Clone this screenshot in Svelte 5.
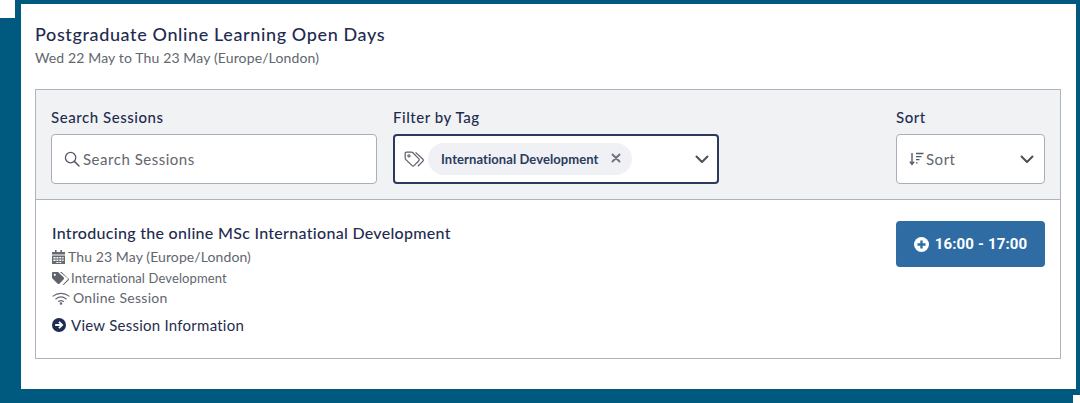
<script>
	const session = {
		title: 'Introducing the online MSc International Development',
		date: 'Thu 23 May (Europe/London)',
		tag: 'International Development',
		kind: 'Online Session',
		time: '16:00 - 17:00'
	}
</script>

<div class="page">
	<div class="corner top-left"></div>
	<div class="corner bottom-right"></div>

	<main class="panel">
		<h1>Postgraduate Online Learning Open Days</h1>
		<p class="dates">Wed 22 May to Thu 23 May (Europe/London)</p>

		<section class="box">
			<div class="filters">
				<div class="field search">
					<label for="q">Search Sessions</label>
					<div class="control">
						<svg class="ico-search" viewBox="0 0 16 16" width="16" height="16">
							<circle cx="6.6" cy="6.6" r="5.2" fill="none" stroke="#555b66" stroke-width="1.3" />
							<path d="M10.4 10.4 15 15" stroke="#555b66" stroke-width="1.5" stroke-linecap="round" />
						</svg>
						<span id="q" class="placeholder">Search Sessions</span>
					</div>
				</div>

				<div class="field tag">
					<label for="t">Filter by Tag</label>
					<div class="control focused">
						<svg class="ico-tags" viewBox="0 0 18 14.500" width="20" height="16" fill="none" stroke="#5c6068" stroke-width="1.100" stroke-linejoin="round">
							<path d="M1 2.200c0-.7.5-1.200 1.200-1.200h4.600c.4 0 .7.1 1 .4l5.600 5.700c.5.5.5 1.200 0 1.700l-4.400 4.500c-.5.5-1.200.5-1.700 0L1.400 7.600c-.3-.3-.4-.6-.4-1z" />
							<path d="M10.400 1.200l6.700 6.300c.5.5.5 1.200 0 1.700l-4.600 4.600" />
							<circle cx="4.400" cy="4.400" r="1" />
						</svg>
						<span id="t" class="chip">
							<span class="chip-text">{session.tag}</span>
							<svg viewBox="0 0 10 10" width="10" height="10">
								<path d="M1.500 1.500l7 7M8.500 1.500l-7 7" stroke="#6f7480" stroke-width="2" stroke-linecap="round" />
							</svg>
						</span>
						<svg class="chev" viewBox="0 0 14 9" width="14" height="9">
							<path d="M1.500 1.500 7 7l5.500-5.500" fill="none" stroke="#4a4f5a" stroke-width="2" stroke-linecap="round" stroke-linejoin="round" />
						</svg>
					</div>
				</div>

				<div class="field sort">
					<label for="s">Sort</label>
					<div class="control">
						<svg class="ico-sort" viewBox="0 0 15 14" width="15" height="14">
							<path d="M3 1v11M.8 9.600 3 12.400l2.200-2.800" fill="none" stroke="#555b66" stroke-width="1.400" />
							<path d="M7 1.500h7.500M7 4.600h5.500M7 7.700h3.500M7 10.800h1.600" stroke="#555b66" stroke-width="1.300" />
						</svg>
						<span id="s" class="placeholder sort-text">Sort</span>
						<svg class="chev" viewBox="0 0 14 9" width="14" height="9">
							<path d="M1.500 1.500 7 7l5.500-5.500" fill="none" stroke="#4a4f5a" stroke-width="2" stroke-linecap="round" stroke-linejoin="round" />
						</svg>
					</div>
				</div>
			</div>

			<div class="session">
				<div class="info">
					<h2>{session.title}</h2>
					<div class="meta date">
						<svg viewBox="0 0 13 14" width="13" height="14" fill="#666a72">
							<path d="M3 0h1.600v2H8.400V0H10v2h3v2.600H0V2h3zM0 5.600h13V14H0zM1.400 6.900v1.600h2.200V6.900zm3 0v1.600h2V6.900zm2.900 0v1.600h2V6.900zm2.900 0v1.600h1.400V6.900zM1.400 9.500v1.500h2.200V9.500zm3 0v1.500h2V9.500zm2.900 0v1.500h2V9.500zm2.900 0v1.500h1.400V9.500zM4.400 12v1h2v-1zm2.900 0v1h2v-1z" fill-rule="evenodd" />
						</svg>
						{session.date}
					</div>
					<div class="meta small">
						<svg viewBox="0 0 17 13" width="17" height="13" fill="#5f636b">
							<path fill-rule="evenodd" d="M0 1.200C0 .5.5 0 1.200 0h4.400c.4 0 .7.1.9.4l5.200 5.200c.5.5.5 1.200 0 1.700l-4.300 4.400c-.5.5-1.200.5-1.700 0L.4 6.400C.1 6.100 0 5.800 0 5.400zM2.800 1.700a1.100 1.100 0 1 0 0 2.200 1.100 1.100 0 0 0 0-2.200z" />
							<path d="M8 0h1.200c.4 0 .7.1.9.4l6.400 6.200c.5.500.5 1.100 0 1.600l-4.300 4.400c-.4.400-1 .500-1.500.100l5-5.200c.4-.400.4-.900 0-1.200z" />
						</svg>
						{session.tag}
					</div>
					<div class="meta wifi">
						<svg viewBox="0 0 18 13" width="18" height="13" fill="none" stroke="#666a72" stroke-width="1.100" stroke-linecap="round">
							<path d="M1 4.200C5.500.400 12.500.400 17 4.200" />
							<path d="M3.800 7C7 4.400 11 4.400 14.200 7" />
							<path d="M6.500 9.500c1.500-1.100 3.500-1.100 5 0" />
							<circle cx="9" cy="11.500" r=".8" fill="#666a72" />
						</svg>
						{session.kind}
					</div>
					<a class="more" href="#top">
						<svg viewBox="0 0 14 14" width="14" height="14">
							<circle cx="7" cy="7" r="7" fill="#1f2c50" />
							<path d="M3.200 7h6.500M7 3.900 10.100 7 7 10.100" fill="none" stroke="#fff" stroke-width="1.900" />
						</svg>
						View Session Information
					</a>
				</div>

				<button class="time">
					<svg viewBox="0 0 14 14" width="15" height="15">
						<circle cx="7" cy="7" r="7" fill="#fff" />
						<path d="M7 3.200v7.600M3.200 7h7.600" stroke="#2f6ca3" stroke-width="2.200" />
					</svg>
					{session.time}
				</button>
			</div>
		</section>
	</main>
</div>

<style>
	:global(body) {
		margin: 0;
		background: #005a80;
	}

	.page {
		position: relative;
		width: 1080px;
		height: 403px;
		box-sizing: border-box;
		padding: 4px 4px 14px 21px;
		overflow: hidden;
		font-family: Lato, "Noto Sans", sans-serif;
	}

	.corner {
		position: absolute;
		background: #fff;
	}

	.top-left {
		left: 0;
		top: 0;
		width: 15px;
		height: 18px;
	}

	.bottom-right {
		right: 0;
		bottom: 0;
		width: 7px;
		height: 8px;
	}

	.panel {
		height: 100%;
		box-sizing: border-box;
		background: #fff;
		padding: 20px 15px 0 14px;
		overflow: hidden;
	}

	h1 {
		margin: 0;
		font-size: 18px;
		line-height: 20px;
		font-weight: 500;
		color: #1f2c50;
		letter-spacing: 0.62px;
	}

	.dates {
		margin: 5px 0 0;
		font-size: 14px;
		line-height: 17px;
		color: #62666e;
		letter-spacing: 0.13px;
	}

	.box {
		margin-top: 23px;
		border: 1px solid #aeb3c0;
		height: 270px;
		box-sizing: border-box;
	}

	.filters {
		display: flex;
		height: 110px;
		box-sizing: border-box;
		padding: 18px 15px 0;
		background: #f1f2f4;
		border-bottom: 1px solid #aeb3c0;
	}

	.field label {
		display: block;
		font-size: 15px;
		line-height: 18px;
		font-weight: 500;
		color: #1f2c50;
		margin-bottom: 8px;
		letter-spacing: 0.55px;
	}

	.search {
		width: 326px;
		margin-right: 16px;
	}

	.tag {
		width: 326px;
		margin-right: 177px;
	}

	.sort {
		width: 149px;
	}

	.control {
		display: flex;
		align-items: center;
		height: 50px;
		box-sizing: border-box;
		background: #fff;
		border: 1px solid #a9aebb;
		border-radius: 4px;
		padding: 0 12px;
	}

	.focused {
		border: 2px solid #2c3a60;
		padding: 0 10px 0 9px;
	}

	.placeholder {
		font-size: 15px;
		color: #62666e;
		margin-left: 3px;
		letter-spacing: 0.52px;
	}

	.sort-text {
		margin-left: 2px;
	}

	.chip {
		display: flex;
		align-items: center;
		gap: 12px;
		height: 32px;
		margin-left: 4px;
		padding: 0 11px 0 13px;
		border-radius: 16px;
		background: #f0f1f4;
	}

	.chip-text {
		font-size: 13px;
		font-weight: 700;
		color: #2c3a60;
		letter-spacing: 0.08px;
	}

	.chip svg {
		margin-top: -2px;
	}

	.chev {
		margin-left: auto;
		margin-right: -2px;
	}

	.session {
		display: flex;
		justify-content: space-between;
		padding: 21px 15px 0 16px;
	}

	h2 {
		margin: 1px 0 3px;
		font-size: 16px;
		line-height: 22px;
		font-weight: 500;
		color: #1f2c50;
		letter-spacing: 0.3px;
	}

	.meta {
		display: flex;
		align-items: center;
		gap: 3px;
		font-size: 14px;
		line-height: 20px;
		color: #62666e;
		letter-spacing: 0.1px;
	}

	.small {
		font-size: 13px;
		margin-top: 1px;
		gap: 2px;
		letter-spacing: 0.12px;
	}

	.wifi {
		letter-spacing: 0.3px;
	}

	.more {
		display: flex;
		align-items: center;
		gap: 5px;
		margin-top: 7px;
		font-size: 15px;
		line-height: 20px;
		color: #1f2c50;
		text-decoration: none;
		letter-spacing: 0.25px;
	}

	.time {
		display: flex;
		align-items: center;
		justify-content: center;
		gap: 6px;
		width: 149px;
		height: 46px;
		border: 0;
		border-radius: 4px;
		background: #2f6ca3;
		color: #fff;
		font: 700 15px Roboto, sans-serif;
		letter-spacing: 0.15px;
	}
</style>
